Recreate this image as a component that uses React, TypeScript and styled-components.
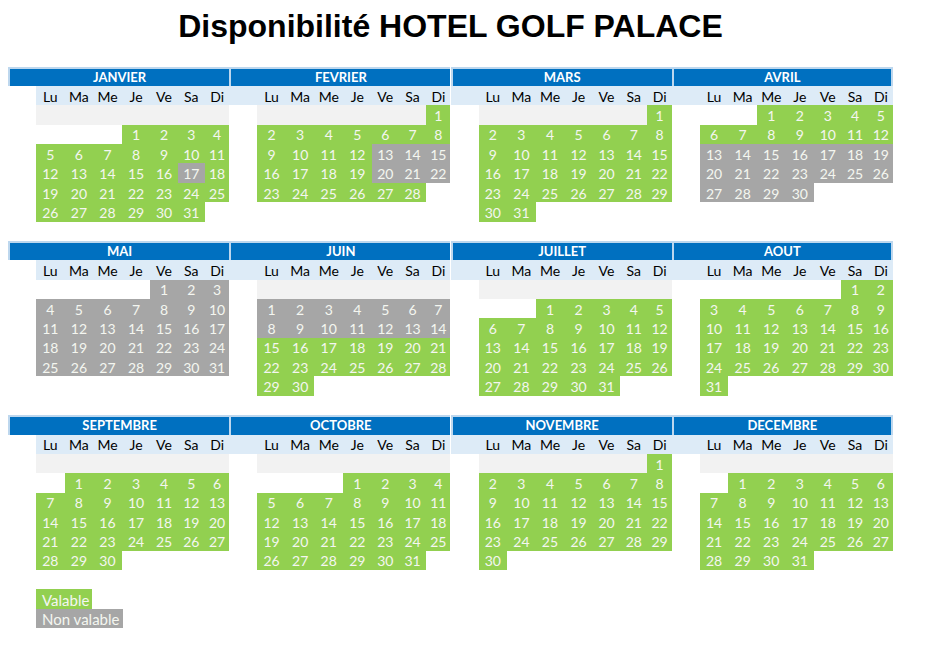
import React from "react";
import styled, { createGlobalStyle } from "styled-components";

const GlobalStyle = createGlobalStyle`
  html, body { margin: 0; padding: 0; background: #ffffff; }
  body { font-family: Lato, "Liberation Sans", sans-serif; }
`;

const ROW_H = 19.37;
const COLS = "28px 28.6px 28.6px 28.6px 28.6px 27.3px 27.3px 24.25px";

type CellKind = "green" | "gray" | "light" | "blank";

interface MonthData {
  name: string;
  start: number;
  row: number;
  days: number;
  leadGray: boolean;
  gray: number[];
}

const range = (a: number, b: number) => Array.from({ length: b - a + 1 }, (_, i) => a + i);

const MONTHS: MonthData[] = [
  { name: "JANVIER", start: 3, row: 1, days: 31, leadGray: false, gray: [17] },
  { name: "FEVRIER", start: 6, row: 0, days: 28, leadGray: true, gray: [13, 14, 15, 20, 21, 22] },
  { name: "MARS", start: 6, row: 0, days: 31, leadGray: true, gray: [] },
  { name: "AVRIL", start: 2, row: 0, days: 30, leadGray: false, gray: range(13, 30) },
  { name: "MAI", start: 4, row: 0, days: 31, leadGray: false, gray: range(1, 31) },
  { name: "JUIN", start: 0, row: 1, days: 30, leadGray: false, gray: range(1, 14) },
  { name: "JUILLET", start: 2, row: 1, days: 31, leadGray: false, gray: [] },
  { name: "AOUT", start: 5, row: 0, days: 31, leadGray: false, gray: [] },
  { name: "SEPTEMBRE", start: 1, row: 1, days: 30, leadGray: false, gray: [] },
  { name: "OCTOBRE", start: 3, row: 1, days: 31, leadGray: false, gray: [] },
  { name: "NOVEMBRE", start: 6, row: 0, days: 30, leadGray: true, gray: [] },
  { name: "DECEMBRE", start: 1, row: 1, days: 31, leadGray: false, gray: [] },
];

const DAY_NAMES = ["Lu", "Ma", "Me", "Je", "Ve", "Sa", "Di"];

const Page = styled.div`
  width: 885px;
  padding-left: 8px;
`;

const Title = styled.h1`
  margin: 0;
  padding-top: 10px;
  height: 32px;
  margin-bottom: 24.7px;
  font-family: "Liberation Sans", Arial, sans-serif;
  font-weight: bold;
  font-size: 32px;
  line-height: 32px;
  text-align: center;
  color: #000000;
`;

const Quarter = styled.div`
  display: flex;
  margin-bottom: ${ROW_H}px;
`;

const MonthBlock = styled.div`
  display: grid;
  grid-template-columns: ${COLS};
  grid-auto-rows: ${ROW_H}px;
  width: 221.25px;
`;

const Header = styled.div<{ $last: boolean }>`
  grid-column: 1 / -1;
  box-sizing: border-box;
  background: #0070c0;
  border-top: 2px solid #bdd7ee;
  border-left: 2px solid #bdd7ee;
  border-right: ${(p) => (p.$last ? "2px solid #bdd7ee" : "none")};
  color: #ffffff;
  font-family: Lato, "Liberation Sans", sans-serif;
  font-weight: bold;
  font-size: 13px;
  display: flex;
  align-items: center;
  justify-content: center;
  padding-bottom: 1px;
`;

const DayName = styled.div<{ $tinted: boolean }>`
  background: ${(p) => (p.$tinted ? "#ddebf7" : "#ffffff")};
  color: #000000;
  font-size: 14px;
  display: flex;
  align-items: center;
  justify-content: center;
  padding-top: 1px;
`;

const cellBg: Record<CellKind, string> = {
  green: "#92d050",
  gray: "#a6a6a6",
  light: "#f2f2f2",
  blank: "#ffffff",
};

const Cell = styled.div<{ $kind: CellKind }>`
  background: ${(p) => cellBg[p.$kind]};
  color: #f4f6f0;
  font-size: 14px;
  display: flex;
  align-items: center;
  justify-content: center;
  padding-top: 1px;
`;

const Legend = styled.div`
  display: grid;
  grid-template-columns: ${COLS};
  grid-auto-rows: ${ROW_H}px;
  width: 221.25px;
`;

const LegendItem = styled.div<{ $kind: "green" | "gray"; $span: number; $row: number }>`
  grid-column: 2 / span ${(p) => p.$span};
  grid-row: ${(p) => p.$row};
  justify-self: start;
  width: ${(p) => (p.$span === 2 ? "56px" : "87px")};
  box-sizing: border-box;
  background: ${(p) => cellBg[p.$kind]};
  color: #f4f6f0;
  font-size: 15px;
  padding-left: 6px;
  display: flex;
  align-items: center;
  padding-top: 1px;
`;

function Month({ m, index }: { m: MonthData; index: number }) {
  const cells: React.ReactNode[] = [];
  const offset = m.row * 7 + m.start;
  for (let r = 0; r < 6; r++) {
    cells.push(<Cell key={`b${r}`} $kind="blank" />);
    for (let c = 0; c < 7; c++) {
      const pos = r * 7 + c;
      const day = pos - offset + 1;
      let kind: CellKind = "blank";
      let label = "";
      if (day >= 1 && day <= m.days) {
        kind = m.gray.includes(day) ? "gray" : "green";
        label = String(day);
      } else if (r === 0 && (m.row === 1 || (m.leadGray && day < 1))) {
        kind = "light";
      }
      cells.push(
        <Cell key={`${r}-${c}`} $kind={kind}>
          {label}
        </Cell>
      );
    }
  }
  return (
    <MonthBlock>
      <Header $last={index % 4 === 3}>{m.name}</Header>
      <DayName $tinted={index % 4 !== 0} />
      {DAY_NAMES.map((d) => (
        <DayName key={d} $tinted>
          {d}
        </DayName>
      ))}
      {cells}
    </MonthBlock>
  );
}

export default function App() {
  const quarters = [0, 1, 2].map((q) => MONTHS.slice(q * 4, q * 4 + 4));
  return (
    <Page>
      <GlobalStyle />
      <Title>Disponibilité HOTEL GOLF PALACE</Title>
      {quarters.map((qs, qi) => (
        <Quarter key={qi}>
          {qs.map((m, mi) => (
            <Month key={m.name} m={m} index={qi * 4 + mi} />
          ))}
        </Quarter>
      ))}
      <Legend>
        <LegendItem $kind="green" $span={2} $row={1}>Valable</LegendItem>
        <LegendItem $kind="gray" $span={3} $row={2}>Non valable</LegendItem>
      </Legend>
    </Page>
  );
}
